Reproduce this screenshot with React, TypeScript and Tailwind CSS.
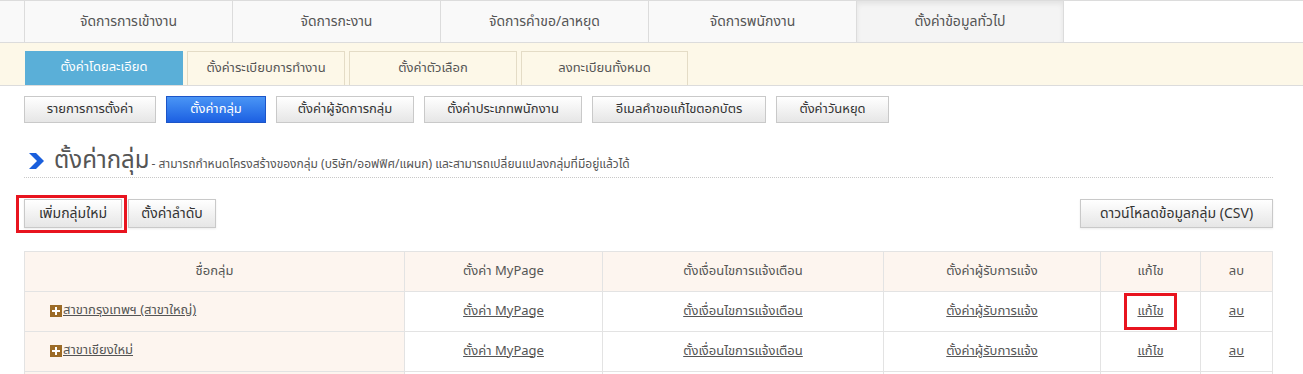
const font = { fontFamily: 'Tahoma, "Noto Sans Thai", "Noto Sans", "DejaVu Sans", sans-serif' };

const topTabs = ['จัดการการเข้างาน', 'จัดการกะงาน', 'จัดการคำขอ/ลาหยุด', 'จัดการพนักงาน', 'ตั้งค่าข้อมูลทั่วไป'];

const subTabs = [
  { label: 'ตั้งค่าโดยละเอียด', w: 'w-[158px]' },
  { label: 'ตั้งค่าระเบียบการทำงาน', w: 'w-[158px]' },
  { label: 'ตั้งค่าตัวเลือก', w: 'w-[168px]' },
  { label: 'ลงทะเบียนทั้งหมด', w: 'w-[167px]' },
];

const menuButtons = [
  { label: 'รายการการตั้งค่า', w: 'w-[132px]' },
  { label: 'ตั้งค่ากลุ่ม', w: 'w-[100px]', active: true },
  { label: 'ตั้งค่าผู้จัดการกลุ่ม', w: 'w-[138px]' },
  { label: 'ตั้งค่าประเภทพนักงาน', w: 'w-[158px]' },
  { label: 'อีเมลคำขอแก้ไขตอกบัตร', w: 'w-[174px]' },
  { label: 'ตั้งค่าวันหยุด', w: 'w-[113px]' },
];

const rows = ['สาขากรุงเทพฯ (สาขาใหญ่)', 'สาขาเชียงใหม่', 'สาขาภูเก็ต'];

function GrayButton({ children, className = '' }: { children: React.ReactNode; className?: string }) {
  return (
    <button
      className={`h-[29px] px-2 border border-[#c9c9c9] bg-gradient-to-b from-white to-[#e6e6e6] text-[14px] text-[#333] shadow-[0_1px_2px_rgba(0,0,0,0.08)] ${className}`}
    >
      {children}
    </button>
  );
}

export default function App() {
  return (
    <div className="w-[1303px] h-[374px] overflow-hidden bg-white" style={font}>
      {/* top nav */}
      <div className="flex border-t border-b border-[#dcdcdc] bg-white">
        <div className="w-6 bg-[#f9f9f9]" />
        {topTabs.map((t, i) => (
          <div
            key={t}
            className={`w-[208px] h-[41px] flex items-center justify-center text-[14px] text-[#555] border-l border-[#dcdcdc] ${
              i === 4
                ? 'bg-[#f4f4f4] border-r shadow-[inset_0_3px_5px_rgba(0,0,0,0.07)]'
                : 'bg-[#f9f9f9]'
            }`}
          >
            {t}
          </div>
        ))}
      </div>

      {/* sub nav */}
      <div className="flex gap-1 pl-[25px] pt-2 h-[43px] bg-[#fdf8e8] border-b border-[#dcdcdc]">
        {subTabs.map((t, i) => (
          <div
            key={t.label}
            className={`${t.w} h-[34px] flex items-center justify-center text-[13px] ${
              i === 0
                ? 'bg-[#5aafd8] text-white'
                : 'bg-[#fdf8e8] text-[#555] border-t border-l border-r border-[#e4dcc6]'
            }`}
          >
            {t.label}
          </div>
        ))}
      </div>

      <div className="pl-6 pr-[30px]">
        {/* menu buttons */}
        <div className="flex gap-[10px] mt-[10px]">
          {menuButtons.map((b) =>
            b.active ? (
              <button
                key={b.label}
                className={`${b.w} h-[27px] border border-[#1c55c8] bg-gradient-to-b from-[#4a95f5] to-[#1d5fe2] text-white text-[13px]`}
              >
                {b.label}
              </button>
            ) : (
              <button
                key={b.label}
                className={`${b.w} h-[27px] border border-[#c9c9c9] bg-gradient-to-b from-white to-[#e6e6e6] text-[#333] text-[13px]`}
              >
                {b.label}
              </button>
            )
          )}
        </div>

        {/* heading */}
        <div className="mt-[24px] flex items-end h-[30px] pl-[5px] pb-[4px]">
          <svg width="15" height="16" viewBox="0 0 15 16" className="mb-[4px]">
            <polygon points="0,0 7,0 15,8 7,16 0,16 8,8" fill="#1a5fdc" />
          </svg>
          <span className="ml-[10px] text-[24px] leading-none text-[#555]">ตั้งค่ากลุ่ม</span>
          <span className="text-[12px] text-[#555] ml-[2px]">
            - สามารถกำหนดโครงสร้างของกลุ่ม (บริษัท/ออฟฟิศ/แผนก) และสามารถเปลี่ยนแปลงกลุ่มที่มีอยู่แล้วได้
          </span>
        </div>
        <div className="border-b border-dotted border-[#c8c8c8]" />

        {/* actions */}
        <div className="flex items-center justify-between mt-[21px]">
          <div className="flex items-center">
            <div className="relative">
              <GrayButton className="w-[98px]">เพิ่มกลุ่มใหม่</GrayButton>
              <div className="absolute -left-2 -top-1 -right-[5px] -bottom-[5px] border-[3px] border-[#e8141f] pointer-events-none" />
            </div>
            <GrayButton className="w-[88px] ml-[6px]">ตั้งค่าลำดับ</GrayButton>
          </div>
          <GrayButton className="w-[193px]">ดาวน์โหลดข้อมูลกลุ่ม (CSV)</GrayButton>
        </div>

        {/* table */}
        <table className="mt-[23px] w-full border-collapse text-[13px] text-[#555]">
          <thead>
            <tr className="bg-[#fdf5ef] h-[40px]">
              <th className="w-[380px] border border-[#e3e3e3] font-normal">ชื่อกลุ่ม</th>
              <th className="w-[198px] border border-[#e3e3e3] font-normal">ตั้งค่า MyPage</th>
              <th className="w-[281px] border border-[#e3e3e3] font-normal">ตั้งเงื่อนไขการแจ้งเตือน</th>
              <th className="w-[217px] border border-[#e3e3e3] font-normal">ตั้งค่าผู้รับการแจ้ง</th>
              <th className="w-[100px] border border-[#e3e3e3] font-normal">แก้ไข</th>
              <th className="border border-[#e3e3e3] font-normal">ลบ</th>
            </tr>
          </thead>
          <tbody>
            {rows.map((r, i) => (
              <tr key={r} className="h-[40px]">
                <td className="bg-[#fdf5ef] border border-[#e3e3e3] pl-[25px]">
                  <span className="inline-flex items-center">
                    <span className="w-[12px] h-[12px] bg-[#9c6b27] flex items-center justify-center mr-[1px]">
                      <svg width="8" height="8" viewBox="0 0 8 8">
                        <path d="M3 0h2v3h3v2H5v3H3V5H0V3h3z" fill="#fff" />
                      </svg>
                    </span>
                    <a className="underline text-[#555]">{r}</a>
                  </span>
                </td>
                <td className="border border-[#e3e3e3] text-center"><a className="underline">ตั้งค่า MyPage</a></td>
                <td className="border border-[#e3e3e3] text-center"><a className="underline">ตั้งเงื่อนไขการแจ้งเตือน</a></td>
                <td className="border border-[#e3e3e3] text-center"><a className="underline">ตั้งค่าผู้รับการแจ้ง</a></td>
                <td className="border border-[#e3e3e3] text-center">
                  {i === 0 ? (
                    <span className="inline-flex items-center justify-center w-[53px] h-[37px] border-[3px] border-[#e8141f]">
                      <a className="underline">แก้ไข</a>
                    </span>
                  ) : (
                    <a className="underline">แก้ไข</a>
                  )}
                </td>
                <td className="border border-[#e3e3e3] text-center"><a className="underline">ลบ</a></td>
              </tr>
            ))}
          </tbody>
        </table>
      </div>
    </div>
  );
}
